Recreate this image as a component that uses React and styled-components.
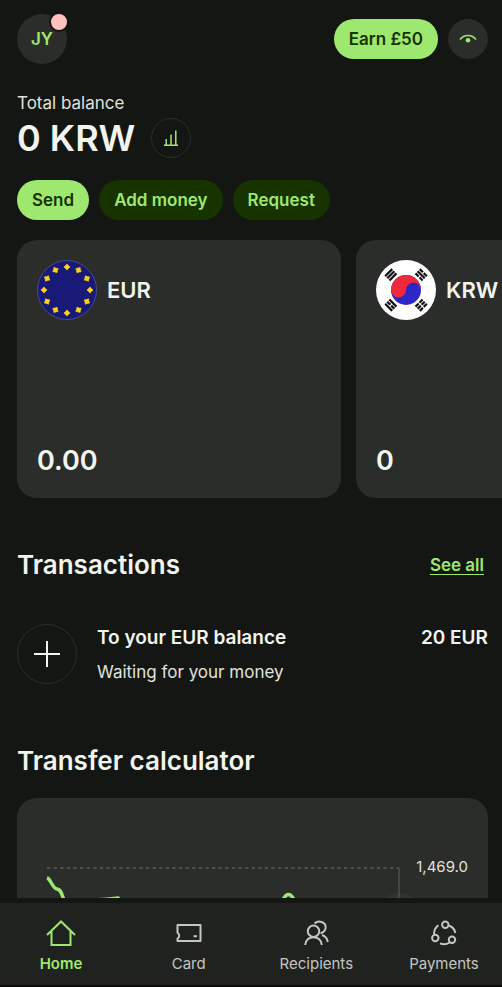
import styled, { createGlobalStyle, ThemeProvider } from 'styled-components';

const theme = {
  colors: {
    background: '#141613',
    surface: '#2b2d2a',
    nav: '#20221f',
    outline: '#2b2d2a',
    green: '#9fe870',
    forest: '#163300',
    text: '#f2f4ef',
    textSoft: '#e0e2dd',
    textMuted: '#c4c6c2',
    badge: '#ffc0bf',
  },
};

const GlobalStyle = createGlobalStyle`
  * {
    box-sizing: border-box;
  }
  body {
    margin: 0;
    background: ${props => props.theme.colors.background};
    color: ${props => props.theme.colors.text};
    font-family: Inter, 'Liberation Sans', sans-serif;
    font-size: 17px;
  }
  h1, h2, h3, p {
    margin: 0;
    padding: 0;
  }
  button {
    font: inherit;
    border: 0;
    padding: 0;
    cursor: pointer;
  }
  svg {
    display: block;
  }
`;

const Screen = styled.div`
  display: flex;
  flex-direction: column;
  height: 100vh;
`;

const Content = styled.main`
  flex: 1;
  min-height: 0;
  overflow: hidden;
  padding: 14px 14px 0 17px;
`;

const Header = styled.header`
  display: flex;
  align-items: center;
  justify-content: space-between;
`;

const Group = styled.div`
  display: flex;
  align-items: center;
  gap: ${props => props.$gap || 10}px;
`;

const Avatar = styled.button`
  position: relative;
  width: 50px;
  height: 50px;
  border-radius: 50%;
  background: ${props => props.theme.colors.surface};
  color: ${props => props.theme.colors.green};
  font-weight: 600;
`;

const Badge = styled.span`
  position: absolute;
  top: -2px;
  right: -2px;
  width: 20px;
  height: 20px;
  border: 2px solid ${props => props.theme.colors.background};
  border-radius: 50%;
  background: ${props => props.theme.colors.badge};
`;

const Pill = styled.button`
  height: 40px;
  padding: 0 15px;
  border-radius: 20px;
  background: ${props =>
    props.$primary ? props.theme.colors.green : props.theme.colors.forest};
  color: ${props =>
    props.$primary ? props.theme.colors.forest : props.theme.colors.green};
  font-weight: 600;
`;

const RoundButton = styled.button`
  display: flex;
  align-items: center;
  justify-content: center;
  width: 40px;
  height: 40px;
  border-radius: 50%;
  border: 1px solid ${props => props.theme.colors.outline};
  background: ${props =>
    props.$filled ? props.theme.colors.surface : 'transparent'};
  color: ${props => props.theme.colors.green};
`;

const Balance = styled.section`
  margin-top: 28px;

  p {
    margin-bottom: 4px;
    color: ${props => props.theme.colors.textSoft};
    line-height: 22px;
  }
  h1 {
    font-size: 36px;
    font-weight: 600;
    line-height: 40px;
  }
`;

const Actions = styled.div`
  display: flex;
  gap: 10px;
  margin-top: 22px;
`;

const Accounts = styled.section`
  display: flex;
  gap: 15px;
  margin: 20px -14px 0 0;
  overflow: hidden;
`;

const Account = styled.article`
  flex: none;
  display: flex;
  flex-direction: column;
  justify-content: space-between;
  width: 324px;
  height: 258px;
  padding: 20px;
  border-radius: 20px;
  background: ${props => props.theme.colors.surface};

  h3 {
    font-size: 22px;
    font-weight: 600;
  }
  p {
    font-size: 27px;
    font-weight: 600;
    line-height: 34px;
  }
`;

const SectionHeader = styled.div`
  display: flex;
  align-items: center;
  justify-content: space-between;
  margin-top: ${props => props.$space}px;
  padding-right: 4px;

  h2 {
    font-size: 26px;
    font-weight: 600;
    line-height: 34px;
  }
  a {
    color: ${props => props.theme.colors.green};
    font-weight: 600;
    text-underline-offset: 3px;
  }
`;

const Transaction = styled.article`
  display: flex;
  align-items: center;
  gap: 20px;
  margin-top: 42px;
`;

const TransactionIcon = styled.div`
  display: flex;
  align-items: center;
  justify-content: center;
  width: 60px;
  height: 60px;
  border: 1px solid ${props => props.theme.colors.outline};
  border-radius: 50%;
`;

const TransactionBody = styled.div`
  flex: 1;

  div {
    display: flex;
    justify-content: space-between;
    line-height: 28px;
  }
  h3,
  strong {
    font-size: 19px;
    font-weight: 600;
  }
  p {
    margin-top: 8px;
    color: ${props => props.theme.colors.textSoft};
    line-height: 24px;
  }
`;

const Calculator = styled.section`
  display: flex;
  margin-top: 20px;
  padding: 59px 20px 0 30px;
  height: 400px;
  border-radius: 20px;
  background: ${props => props.theme.colors.surface};
  color: ${props => props.theme.colors.textSoft};
  font-size: 15px;
  line-height: 20px;

  svg {
    flex: 1;
    min-width: 0;
    height: 200px;
    overflow: visible;
  }
`;

const BottomNav = styled.nav`
  display: flex;
  justify-content: space-between;
  padding: 17px 14px 11px 17px;
  border-top: 5px solid ${props => props.theme.colors.background};
  border-bottom: 2px solid #0c0d0b;
  background: ${props => props.theme.colors.nav};
`;

const NavItem = styled.a`
  display: flex;
  flex-direction: column;
  align-items: center;
  gap: 8px;
  width: 88px;
  color: ${props =>
    props.$active ? props.theme.colors.green : props.theme.colors.textMuted};
  font-size: 15px;
  font-weight: ${props => (props.$active ? 600 : 400)};
  line-height: 20px;
  text-decoration: none;
`;

const EyeIcon = () => (
  <svg width="18" height="10" viewBox="0 0 18 10" fill="none">
    <path d="M1 5.5C5 0 13 0 17 5.5" stroke="currentColor" strokeWidth="1.5" />
    <circle cx="9" cy="6.2" r="2.3" fill="currentColor" />
  </svg>
);

const BarsIcon = () => (
  <svg
    width="16"
    height="18"
    viewBox="0 0 16 18"
    fill="none"
    stroke="currentColor"
    strokeWidth="1.5"
  >
    <path d="M1 16.3H15M3.2 16V10M8 16V5.5M12.8 16V1.5" />
  </svg>
);

const PlusIcon = () => (
  <svg width="26" height="26" viewBox="0 0 26 26" fill="none">
    <path d="M13 0V26M0 13H26" stroke="currentColor" strokeWidth="2" />
  </svg>
);

const EuFlag = () => (
  <svg width="60" height="60" viewBox="0 0 60 60">
    <circle cx="30" cy="30" r="29.5" fill="#191a78" stroke="#484a90" />
    {Array.from({ length: 12 }, (_, i) => (
      <path
        key={i}
        d="M30 3.9L31.4 5.6L33.1 7L31.4 8.4L30 10.1L28.6 8.4L26.9 7L28.6 5.6Z"
        fill="#ffd21a"
        stroke="#ffd21a"
        strokeWidth="0.6"
        transform={`rotate(${i * 30} 30 30)`}
      />
    ))}
  </svg>
);

// each trigram is three bars, a zero marks a broken one
const trigrams = [
  { angle: -135, bars: [1, 1, 1] },
  { angle: -45, bars: [0, 1, 0] },
  { angle: 135, bars: [1, 0, 1] },
  { angle: 45, bars: [0, 0, 0] },
];

const KoreaFlag = () => (
  <svg width="60" height="60" viewBox="0 0 60 60">
    <circle cx="30" cy="30" r="30" fill="#fff" />
    <circle cx="30" cy="30" r="15" fill="#2e27c8" />
    <path
      d="M15 30A15 15 0 0 1 45 30A7.5 7.5 0 0 0 30 30A7.5 7.5 0 0 1 15 30Z"
      fill="#f0283c"
    />
    {trigrams.map(({ angle, bars }) => (
      <g
        key={angle}
        transform={`rotate(${angle} 30 30)`}
        stroke="#111"
        strokeWidth="2.2"
      >
        {bars.map((solid, i) => (
          <path
            key={i}
            d={`M${48.5 + i * 3} 25V35`}
            strokeDasharray={solid ? undefined : '4.4 1.2'}
          />
        ))}
      </g>
    ))}
  </svg>
);

const navIcons = {
  Home: <path d="M1 15L15 1.5L29 15M5.5 11V25H24.5V11" />,
  Card: (
    <>
      <path
        d="M3.5 5H26.5V21H3.5V18.6C5.8 17.4 5.8 14 3.5 12.8Z"
        strokeLinejoin="round"
      />
      <path d="M19.5 16.2H23" />
    </>
  ),
  Recipients: (
    <>
      <circle cx="12.5" cy="11.3" r="5.7" />
      <path d="M4.2 25C5 14.5 20 14.5 20.8 25" />
      <path d="M13.5 3.4C17.5 0 24.8 1.8 24.6 7.5C24.5 11 22.5 12.5 19.5 13.2M21 15C24.5 16.2 26.3 18.5 26.8 22" />
    </>
  ),
  Payments: (
    <>
      <circle cx="16.3" cy="4.7" r="3.2" />
      <circle cx="6.3" cy="18" r="3.2" />
      <circle cx="23" cy="19.7" r="3.2" />
      <path d="M9.3 5.2C6.5 7.5 5 10.5 5 14M20 5.5C23.5 7 25.8 9.5 26.3 13M11 23.3C14 24.6 17.5 24.5 20.5 22.5" />
    </>
  ),
};

const NavIcon = ({ name }) => (
  <svg
    width="30"
    height="26"
    viewBox="0 0 30 26"
    fill="none"
    stroke="currentColor"
    strokeWidth="2"
  >
    {navIcons[name]}
  </svg>
);

const RateChart = () => (
  <svg>
    <circle cx="352" cy="61" r="25" fill="#30362c" />
    <path
      d="M0 11H352"
      stroke="#575956"
      strokeWidth="1.5"
      strokeDasharray="3.3 3.3"
    />
    <path d="M352 11V200" stroke="#4d4f4c" strokeWidth="1.5" />
    <path
      d="M0 21C4 22 5 31 10 32C15 33 14 37 18 45C24 60 34 43 42 43C54 43 62 42 71 41C90 70 110 80 140 72C180 62 220 85 235 45C239 35 244 35 248 45C270 90 320 75 352 61"
      fill="none"
      stroke="#9fe870"
      strokeWidth="3.5"
    />
  </svg>
);

const accounts = [
  { currency: 'EUR', amount: '0.00', Flag: EuFlag },
  { currency: 'KRW', amount: '0', Flag: KoreaFlag },
];

const App = () => (
  <ThemeProvider theme={theme}>
    <GlobalStyle />
    <Screen>
      <Content>
        <Header>
          <Avatar>
            JY
            <Badge />
          </Avatar>
          <Group>
            <Pill $primary>Earn £50</Pill>
            <RoundButton $filled aria-label="Hide balances">
              <EyeIcon />
            </RoundButton>
          </Group>
        </Header>

        <Balance>
          <p>Total balance</p>
          <Group $gap={16}>
            <h1>0 KRW</h1>
            <RoundButton aria-label="Insights">
              <BarsIcon />
            </RoundButton>
          </Group>
        </Balance>

        <Actions>
          <Pill $primary>Send</Pill>
          <Pill>Add money</Pill>
          <Pill>Request</Pill>
        </Actions>

        <Accounts>
          {accounts.map(({ currency, amount, Flag }) => (
            <Account key={currency}>
              <Group>
                <Flag />
                <h3>{currency}</h3>
              </Group>
              <p>{amount}</p>
            </Account>
          ))}
        </Accounts>

        <SectionHeader $space={50}>
          <h2>Transactions</h2>
          <a href="#transactions">See all</a>
        </SectionHeader>
        <Transaction>
          <TransactionIcon>
            <PlusIcon />
          </TransactionIcon>
          <TransactionBody>
            <div>
              <h3>To your EUR balance</h3>
              <strong>20 EUR</strong>
            </div>
            <p>Waiting for your money</p>
          </TransactionBody>
        </Transaction>

        <SectionHeader $space={60}>
          <h2>Transfer calculator</h2>
        </SectionHeader>
        <Calculator>
          <RateChart />
          <span>1,469.0</span>
        </Calculator>
      </Content>

      <BottomNav>
        {Object.keys(navIcons).map(name => (
          <NavItem
            key={name}
            href={`#${name.toLowerCase()}`}
            $active={name === 'Home'}
          >
            <NavIcon name={name} />
            {name}
          </NavItem>
        ))}
      </BottomNav>
    </Screen>
  </ThemeProvider>
);

export default App;
